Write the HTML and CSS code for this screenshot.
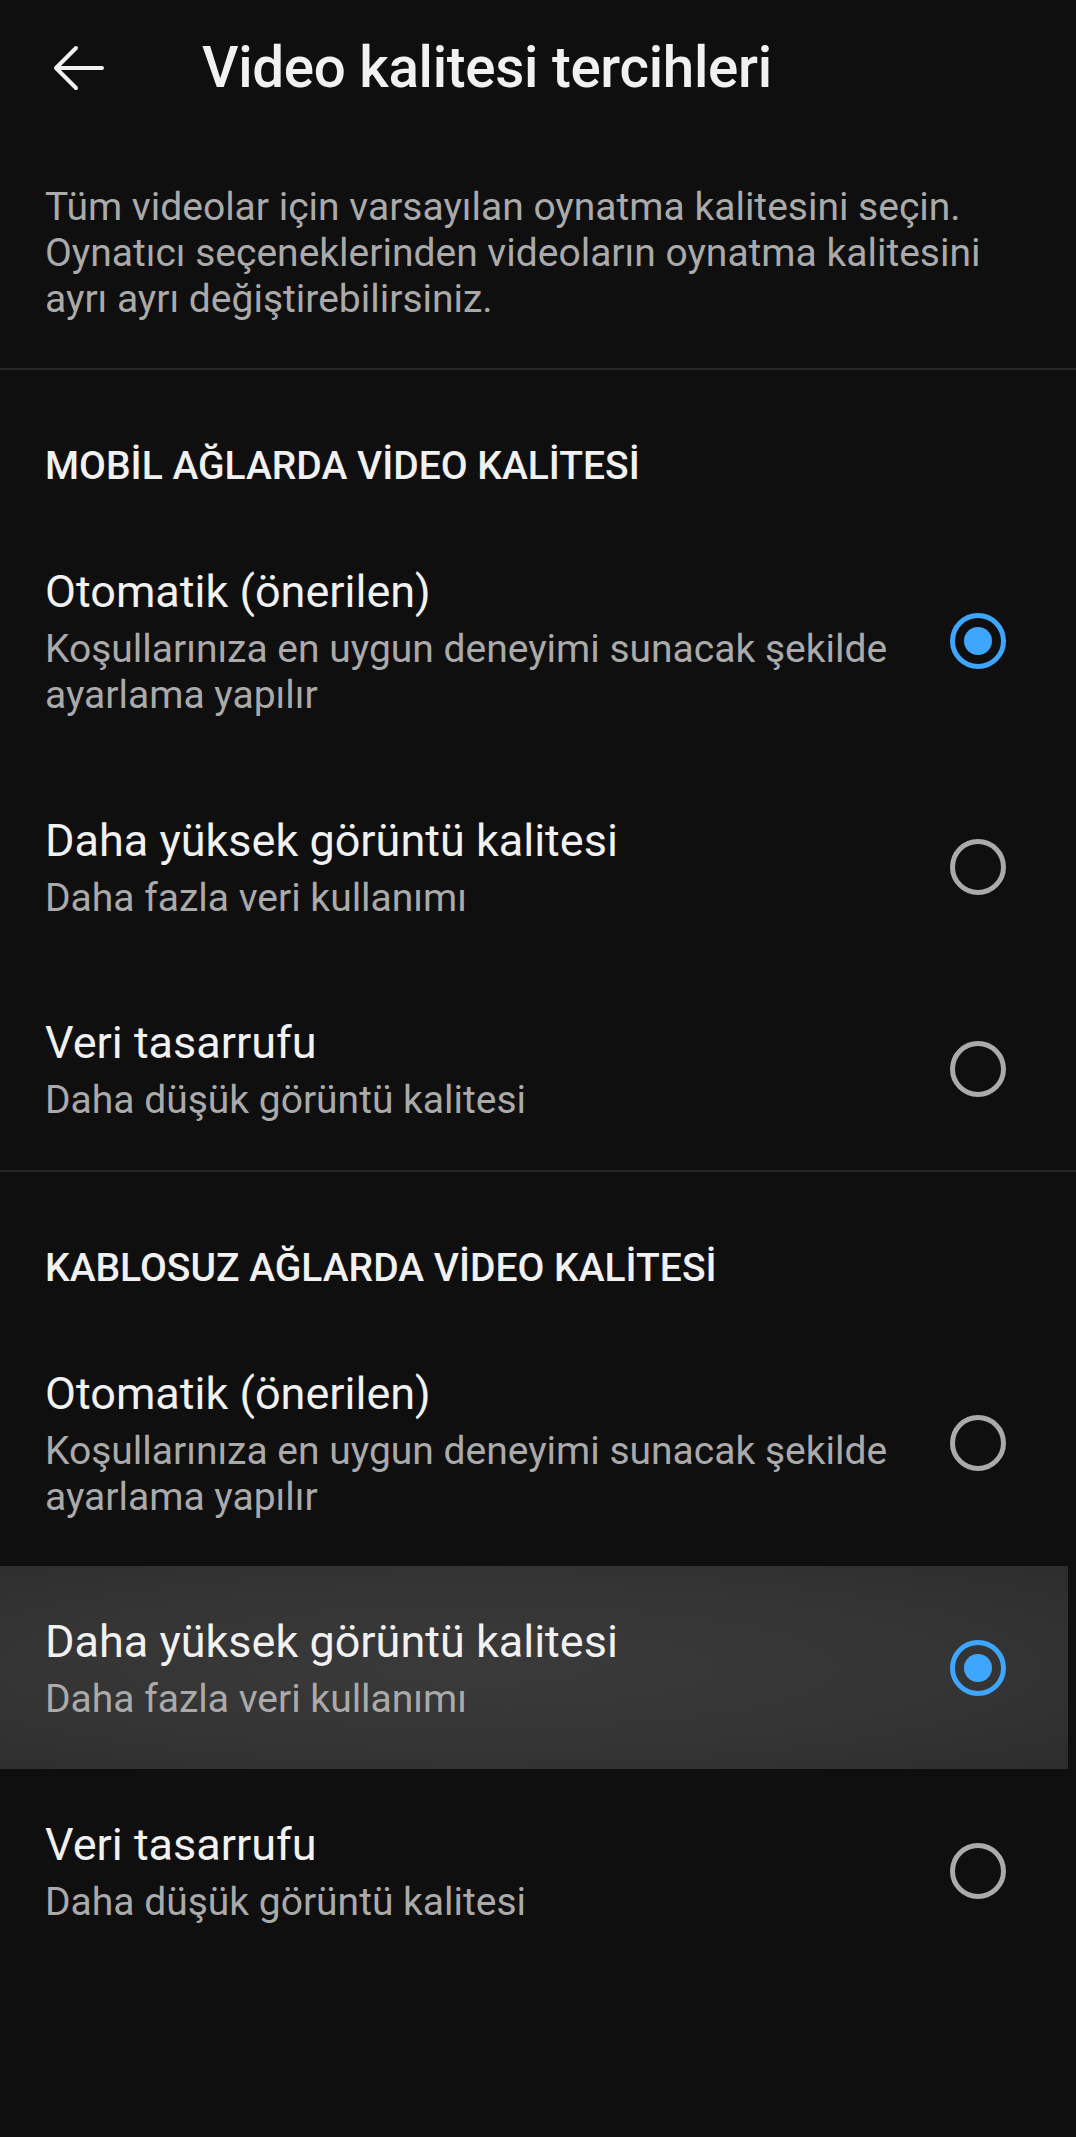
FILE: index.html
```html
<!DOCTYPE html>
<html lang="tr">
<head>
  <meta charset="UTF-8" />
  <meta name="viewport" content="width=device-width, initial-scale=1.0"/>
  <title>Video kalitesi tercihleri</title>
  <link rel="stylesheet" href="styles.css">
</head>
<body>

  <header class="topbar">
    <button class="back" aria-label="Geri">
      <svg width="56" height="48" viewBox="0 0 56 48">
        <path d="M6 24H52M26 4L6 24L26 44" fill="none" stroke="#f1f1f1" stroke-width="4" stroke-linecap="round" stroke-linejoin="round"/>
      </svg>
    </button>
    <h1>Video kalitesi tercihleri</h1>
  </header>

  <p class="intro">
    Tüm videolar için varsayılan oynatma kalitesini seçin.<br>
    Oynatıcı seçeneklerinden videoların oynatma kalitesini<br>
    ayrı ayrı değiştirebilirsiniz.
  </p>

  <section class="group">
    <h2>Mobil ağlarda video kalitesi</h2>

    <label class="option">
      <div class="text">
        <div class="name">Otomatik (önerilen)</div>
        <div class="desc">Koşullarınıza en uygun deneyimi sunacak şekilde<br>ayarlama yapılır</div>
      </div>
      <span class="radio on"></span>
    </label>

    <label class="option">
      <div class="text">
        <div class="name">Daha yüksek görüntü kalitesi</div>
        <div class="desc">Daha fazla veri kullanımı</div>
      </div>
      <span class="radio"></span>
    </label>

    <label class="option">
      <div class="text">
        <div class="name">Veri tasarrufu</div>
        <div class="desc">Daha düşük görüntü kalitesi</div>
      </div>
      <span class="radio"></span>
    </label>
  </section>

  <section class="group">
    <h2>Kablosuz ağlarda video kalitesi</h2>

    <label class="option">
      <div class="text">
        <div class="name">Otomatik (önerilen)</div>
        <div class="desc">Koşullarınıza en uygun deneyimi sunacak şekilde<br>ayarlama yapılır</div>
      </div>
      <span class="radio"></span>
    </label>

    <label class="option pressed">
      <div class="text">
        <div class="name">Daha yüksek görüntü kalitesi</div>
        <div class="desc">Daha fazla veri kullanımı</div>
      </div>
      <span class="radio on"></span>
    </label>

    <label class="option">
      <div class="text">
        <div class="name">Veri tasarrufu</div>
        <div class="desc">Daha düşük görüntü kalitesi</div>
      </div>
      <span class="radio"></span>
    </label>
  </section>

</body>
</html>
```

FILE: styles.css
```css
body {
  background-color: #0f0f0f;
  color: #f1f1f1;
  font-family: Roboto, "Noto Sans", sans-serif;
  margin: 0;
  padding: 0;
  min-height: 2137px;
}

.topbar {
  display: flex;
  align-items: center;
  height: 136px;
}

.back {
  background: none;
  border: 0;
  padding: 0;
  margin-left: 50px;
  width: 56px;
  height: 48px;
  display: flex;
}

h1 {
  margin: 0 0 0 96px;
  font-size: 56.5px;
  font-weight: 500;
  letter-spacing: -0.3px;
}

.intro {
  margin: 0;
  padding: 48px 45px 46px;
  font-size: 39px;
  line-height: 46px;
  color: #aaaaaa;
  border-bottom: 2px solid #262626;
}

.group {
  border-bottom: 2px solid #262626;
}

.group:last-child {
  border-bottom: 0;
}

h2 {
  margin: 0;
  padding: 76px 45px 30px;
  font-size: 39px;
  line-height: 40px;
  font-weight: 500;
  text-transform: uppercase;
}

.option {
  display: flex;
  align-items: center;
  justify-content: space-between;
  padding: 48px 0 46.5px 45px;
  margin-right: 8px;
}

.option.pressed {
  background: radial-gradient(ellipse at 45% 50%, #3a3a3a 0%, #343434 60%, #2d2d2d 100%);
}

.name {
  font-size: 45px;
  line-height: 56px;
}

.desc {
  margin-top: 6px;
  font-size: 39px;
  line-height: 46px;
  color: #aaaaaa;
}

.radio {
  flex: none;
  width: 46px;
  height: 46px;
  border: 5px solid #aaaaaa;
  border-radius: 50%;
  margin-right: 62px;
  position: relative;
}

.radio.on {
  border-color: #3ea6ff;
}

.radio.on::after {
  content: "";
  position: absolute;
  left: 9px;
  top: 9px;
  width: 28px;
  height: 28px;
  border-radius: 50%;
  background: #3ea6ff;
}
```
